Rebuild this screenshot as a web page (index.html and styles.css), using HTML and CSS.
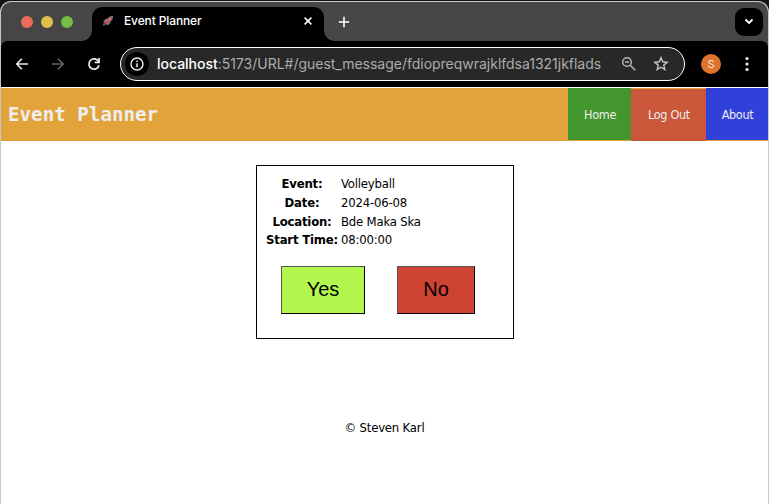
FILE: index.html
```
<!DOCTYPE html>
<html lang="en">
<head>
<meta charset="utf-8">
<title>Event Planner</title>
<link rel="stylesheet" href="styles.css">
</head>
<body>
<div class="window">
  <header class="tabs">
    <div class="lights"><i class="red"></i><i class="yellow"></i><i class="green"></i></div>
    <div class="tab">
      <svg class="rocket" width="12" height="12" viewBox="0 0 12 12"><path d="M1 7 3 4.500 6 3 8 1.200 11 1 10.700 4 9 6 7.500 9 5 10.500 5 8.500Z" fill="#70858b"/><path d="M2 8.500 8.200 1.800 10.400 3.700 4 10Z" fill="#cf4d50"/><path d="M1 8.500 3.500 8 3 10.500 1 11Z" fill="#71484d"/><circle cx="7.800" cy="4.200" r=".8" fill="#9fadb0"/></svg>
      <span class="tab-title">Event Planner</span>
      <svg class="close" width="10" height="10" viewBox="0 0 10 10"><path d="m1.600 1.600 6.800 6.800m0-6.800-6.800 6.800" stroke="#fff" stroke-width="1.500"/></svg>
    </div>
    <svg class="plus" width="12" height="12" viewBox="0 0 12 12"><path d="M6 .8v10.400M.8 6h10.400" stroke="#fff" stroke-width="1.600"/></svg>
    <div class="chevron"><svg width="10" height="8" viewBox="0 0 10 8"><path d="m1.500 1.500 3.500 3.500L8.500 1.500" fill="none" stroke="#fff" stroke-width="1.900"/></svg></div>
  </header>
  <div class="toolbar">
    <svg class="back" width="14" height="14" viewBox="0 0 14 14"><path d="M13 7H2M7 1.700 1.700 7 7 12.300" fill="none" stroke="#e8e8e8" stroke-width="1.600"/></svg>
    <svg class="forward" width="14" height="14" viewBox="0 0 14 14"><path d="M1 7h11M7 1.700 12.300 7 7 12.300" fill="none" stroke="#636363" stroke-width="1.600"/></svg>
    <svg class="reload" width="14" height="14" viewBox="0 0 14 14"><path d="M11.400 4.400A5.100 5.100 0 1 0 12 8.200" fill="none" stroke="#eee" stroke-width="1.700"/><path d="M12 1v4.300H7.700" fill="none" stroke="#eee" stroke-width="1.700"/></svg>
    <div class="address">
      <span class="info"><svg width="14" height="14" viewBox="0 0 14 14"><circle cx="7" cy="7" r="6" fill="none" stroke="#eee" stroke-width="1.400"/><path d="M7 6.200v4M7 3.500v1.500" stroke="#eee" stroke-width="1.500"/></svg></span>
      <span class="url"><b>localhost</b>:5173/URL#/guest_message/fdiopreqwrajklfdsa1321jkflads</span>
      <svg class="magnifier" width="16" height="16" viewBox="0 0 16 16"><circle cx="6" cy="6" r="4.300" fill="none" stroke="#b5b5b5" stroke-width="1.500"/><path d="M4 6h4M9.200 9.200l5 5" stroke="#b5b5b5" stroke-width="1.600"/></svg>
      <svg class="star" width="16" height="16" viewBox="0 0 16 16"><path d="m8 1.700 1.700 4.100 4.500.4-3.400 2.900 1 4.400L8 11.200l-3.800 2.300 1-4.400-3.400-2.900 4.500-.4Z" fill="none" stroke="#c5c5c5" stroke-width="1.400"/></svg>
    </div>
    <span class="avatar">S</span>
    <svg class="menu" width="4" height="16" viewBox="0 0 4 16" fill="#eee"><circle cx="2" cy="2.500" r="1.600"/><circle cx="2" cy="8" r="1.600"/><circle cx="2" cy="13.500" r="1.600"/></svg>
  </div>
  <nav class="navbar">
    <h1>Event Planner</h1>
    <a class="home">Home</a><a class="logout">Log Out</a><a class="about">About</a>
  </nav>
  <main>
    <section class="card">
      <dl>
        <dt>Event:</dt><dd>Volleyball</dd>
        <dt>Date:</dt><dd>2024-06-08</dd>
        <dt>Location:</dt><dd>Bde Maka Ska</dd>
        <dt>Start Time:</dt><dd>08:00:00</dd>
      </dl>
      <div class="actions"><button class="yes">Yes</button><button class="no">No</button></div>
    </section>
  </main>
  <footer>© Steven Karl</footer>
</div>
</body>
</html>
```
FILE: styles.css
```
* { box-sizing: border-box; }
body { margin: 0; background: #17121a; overflow: hidden; font-family: "DejaVu Sans Condensed", "DejaVu Sans", sans-serif; font-stretch: condensed; }
svg { display: block; flex: none; }
.window { width: 769px; height: 503px; margin-top: 1px; border: 1px solid #c7c6c8; border-bottom: 0; border-radius: 11px 11px 0 0; background: #fff; overflow: hidden; }
.tabs { height: 39px; background: #464646; display: flex; align-items: center; }
.lights { display: flex; gap: 8px; margin-left: 20px; width: 71px; }
.lights i { width: 12px; height: 12px; border-radius: 50%; }
.red { background: #ed6a5e; }
.yellow { background: #e0c04c; }
.green { background: #72be47; }
.tab { position: relative; align-self: flex-end; width: 232px; height: 34px; border-radius: 10px 10px 0 0; background: #000; display: flex; align-items: center; padding: 0 11px 6px 10px; }
.tab::before, .tab::after { content: ""; position: absolute; bottom: 0; width: 10px; height: 10px; }
.tab::before { left: -10px; background: radial-gradient(circle at 0 0, transparent 9.5px, #000 10px); }
.tab::after { right: -10px; background: radial-gradient(circle at 100% 0, transparent 9.5px, #000 10px); }
.tab-title { flex: 1; margin-left: 10px; font: 500 12px/16px Inter, sans-serif; letter-spacing: -.12px; color: #fff; }
.plus { margin-left: 14px; }
.chevron { width: 28px; height: 28px; margin-left: auto; margin-right: 5px; border-radius: 9px; background: #000; display: flex; align-items: center; justify-content: center; }
.toolbar { height: 46px; position: relative; background: #000; display: flex; align-items: center; padding-left: 14px; }
.toolbar::before { content: ""; position: absolute; inset: 0 0 auto; height: 6px; background: radial-gradient(circle at 6px 6px, transparent 5.5px, #464646 6px) left / 6px 6px no-repeat, radial-gradient(circle at 0 6px, transparent 5.5px, #464646 6px) right / 6px 6px no-repeat; }
.forward { margin-left: 22px; }
.reload { margin-left: 22px; }
.address { width: 565px; height: 34px; margin-left: 19px; border: 1px solid #fff; border-radius: 17px; background: #282828; display: flex; align-items: center; padding-left: 4px; }
.info { width: 24px; height: 24px; border-radius: 50%; background: #000; display: flex; align-items: center; justify-content: center; }
.url { width: 455px; margin-left: 8px; font: 14px/20px Inter, sans-serif; letter-spacing: -.015px; color: #acacac; white-space: nowrap; }
.url b { font-weight: 500; color: #fff; }
.magnifier { margin-left: 9px; }
.star { margin-left: 16px; }
.avatar { width: 20px; height: 20px; margin-left: 16px; border-radius: 50%; background: #de742d; color: #f8e5d8; font: 11px/20px Inter, sans-serif; text-align: center; }
.menu { margin-left: 24px; }
.navbar { height: 54px; border-top: 1px solid #fff; background: #e3a33b; display: flex; }
h1 { margin: 0 auto 0 7px; font: bold 19.2px/54px "DejaVu Sans Mono", monospace; height: 53px; color: #eee; }
.navbar a { height: 52px; padding-left: 1px; color: #eee; font-size: 12.5px; line-height: 54px; text-align: center; white-space: nowrap; letter-spacing: -.3px; }
.home { width: 63px; background: #43962e; }
.navbar .logout { width: 75px; margin-top: 1px; line-height: 52px; background: #ca5739; }
.about { width: 62px; background: #3240da; }
main { padding-top: 24px; }
.card { width: 258px; height: 174px; margin: 0 auto; border: 1px solid #000; padding: 9px; position: relative; left: .5px; }
dl { display: grid; grid-template-columns: 72px auto; column-gap: 3px; grid-template-rows: 19px 18.5px 18.5px 18.5px; margin: -.6px 0 0; font-size: 13px; line-height: 19px; color: #000; white-space: nowrap; }
dt { font-weight: bold; text-align: center; letter-spacing: -.2px; }
dd { margin: 0; letter-spacing: -.2px; }
.actions { display: flex; gap: 32px; margin: 16.6px 0 0 15px; }
button { height: 48px; padding: 0 0 2px; border: 1px solid; border-color: #555 #000 #000 #555; font: 20px/44px "Liberation Sans", sans-serif; color: #000; }
.yes { width: 84px; background: #b2f64e; }
.no { width: 78px; background: #cf4332; }
footer { margin-top: 79px; text-align: center; font-size: 13px; line-height: 19px; letter-spacing: -.2px; color: #000; }
```
